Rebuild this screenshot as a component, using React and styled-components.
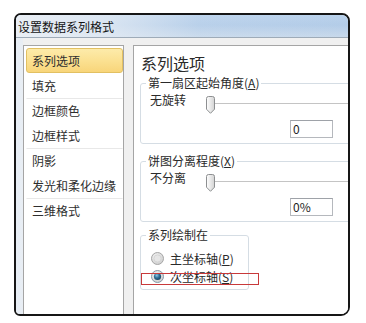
import React from 'react';
import styled, { createGlobalStyle } from 'styled-components';

const Global = createGlobalStyle`
  html, body { margin: 0; padding: 0; background: #ffffff; }
  body { font-family: "Noto Sans CJK SC", "Noto Sans", sans-serif; color: #2a2a2a; }
`;

const Page = styled.div`
  width: 366px;
  height: 323px;
  box-sizing: border-box;
  padding: 13px 0 0 14px;
  overflow: hidden;
`;

const Window = styled.div`
  width: 336px;
  height: 303px;
  box-sizing: border-box;
  border: 2px solid #161616;
  border-radius: 7px 8px 9px 6px;
  overflow: hidden;
  display: flex;
  flex-direction: column;
  background: #f0f0f0;
`;

const TitleBar = styled.div`
  height: 23px;
  flex: 0 0 23px;
  box-sizing: border-box;
  border-bottom: 1px solid #9eabb8;
  padding-left: 2px;
  display: flex;
  align-items: center;
  font-size: 12px;
  color: #141414;
  background:
    linear-gradient(to right, rgba(236,240,245,0.95) 0%, rgba(232,238,245,0.7) 28%, rgba(220,232,245,0.15) 55%, rgba(200,220,240,0) 100%),
    linear-gradient(to bottom, #bad2ec 0%, #b3cce8 45%, #c8d9eb 100%);
`;

const Client = styled.div`
  flex: 1;
  min-height: 0;
  display: flex;
  gap: 9px;
  padding: 7px 0 0 7px;
  overflow: hidden;
  background: linear-gradient(to right, #e6edf5 0, #e9eef4 7px, #f0f0f0 7px);
`;

const NavList = styled.div`
  flex: 0 0 101px;
  box-sizing: border-box;
  border: 1px solid #a5a5a5;
  border-bottom: none;
  background: #fff;
  padding: 2px 0 0 2px;
  display: flex;
  flex-direction: column;
`;

const NavItem = styled.div`
  height: 25px;
  box-sizing: border-box;
  display: flex;
  align-items: center;
  padding-left: 5px;
  font-size: 12px;
  color: #2e2e2e;
  white-space: nowrap;
  border: 1px solid ${p => (p.$selected ? '#e2c062' : 'transparent')};
  border-top-color: ${p => (p.$selected ? '#e2c062' : p.$sep ? '#e8e8e8' : 'transparent')};
  border-radius: ${p => (p.$selected ? '3px' : '0')};
  background: ${p => (p.$selected ? 'linear-gradient(to bottom, #fdebaa 0%, #fbe192 50%, #f8d57a 100%)' : 'transparent')};
`;

const Panel = styled.div`
  flex: 0 0 270px;
  box-sizing: border-box;
  border-left: 1px solid #a5a5a5;
  border-top: 1px solid #a5a5a5;
  background: #fff;
  padding: 0 0 0 6px;
  display: flex;
  flex-direction: column;
  align-items: flex-start;
`;

const Heading = styled.div`
  font-size: 16px;
  line-height: 20px;
  padding: 7px 0 0 1px;
  color: #2a2a2a;
`;

const Group = styled.fieldset`
  margin: ${p => p.$mt}px 0 0 0;
  padding: 0;
  border: 1px solid #d5dde4;
  border-radius: 3px;
  width: ${p => p.$w}px;
  min-width: 0;
  box-sizing: border-box;
`;

const Legend = styled.legend`
  margin-left: 5px;
  padding: 0 2px;
  font-size: 12px;
  line-height: 14px;
  color: #2a2a2a;
`;

const Key = styled.span`
  text-decoration: underline;
  text-underline-offset: 1px;
`;

const GroupBody = styled.div`
  padding: ${p => p.$pad};
  display: flex;
  flex-direction: column;
`;

const SliderRow = styled.div`
  display: flex;
  align-items: flex-start;
  padding-top: 3px;
`;

const SliderLabel = styled.div`
  width: 56px;
  font-size: 12px;
  line-height: 14px;
  color: #2a2a2a;
`;

const Thumb = styled.svg`
  margin-top: 3px;
  flex: 0 0 9px;
  display: block;
`;

const Track = styled.div`
  flex: 1;
  height: 1px;
  margin-top: 10px;
  background: #c4c4c4;
`;

const NumberBox = styled.div`
  margin: 6px 0 0 140px;
  width: 43px;
  height: 18px;
  box-sizing: border-box;
  border: 1px solid #b5b8bd;
  border-top-color: #9ea2a8;
  padding-left: 2px;
  font-size: 12px;
  line-height: 16px;
  color: #1e1e1e;
  background: #fff;
`;

const RadioRow = styled.div`
  position: relative;
  height: 16px;
  margin-top: ${p => p.$mt}px;
  display: flex;
  align-items: center;
  gap: 6px;
  font-size: 12px;
  color: #2a2a2a;
`;

const Highlight = styled.div`
  position: absolute;
  left: -10px;
  top: 5px;
  width: 118px;
  height: 12px;
  box-sizing: border-box;
  border: 1px solid #c8393a;
  pointer-events: none;
`;

function SliderThumb() {
  return (
    <Thumb width="9" height="18" viewBox="0 0 9 18">
      <defs>
        <linearGradient id="thumbGrad" x1="0" x2="1" y1="0" y2="0">
          <stop offset="0" stopColor="#ffffff" />
          <stop offset="1" stopColor="#d3d3d3" />
        </linearGradient>
      </defs>
      <path
        d="M0.5 2.5 Q0.5 0.5 2.5 0.5 H6.5 Q8.5 0.5 8.5 2.5 V13.2 L4.5 17.3 L0.5 13.2 Z"
        fill="url(#thumbGrad)"
        stroke="#8d8f91"
        strokeWidth="1"
      />
    </Thumb>
  );
}

function Radio({ checked }) {
  return (
    <svg width="13" height="13" viewBox="0 0 13 13" style={{ display: 'block', flex: '0 0 13px' }}>
      <defs>
        <radialGradient id="radioOuter" cx="0.4" cy="0.35" r="0.75">
          <stop offset="0" stopColor="#f8f8f8" />
          <stop offset="1" stopColor="#c9c9c9" />
        </radialGradient>
        <radialGradient id="radioDot" cx="0.4" cy="0.35" r="0.7">
          <stop offset="0" stopColor="#8fc6e4" />
          <stop offset="0.5" stopColor="#2f6f97" />
          <stop offset="1" stopColor="#173f5c" />
        </radialGradient>
      </defs>
      <circle cx="6.5" cy="6.5" r="6" fill="url(#radioOuter)" stroke={checked ? '#8698a6' : '#a6a6a6'} />
      {checked ? (
        <circle cx="6.5" cy="6.5" r="3.6" fill="url(#radioDot)" />
      ) : (
        <circle cx="6.5" cy="6.5" r="3.6" fill="#e6e6e6" stroke="#d0d0d0" strokeWidth="0.8" />
      )}
    </svg>
  );
}

const navItems = [
  { label: '系列选项', selected: true },
  { label: '填充' },
  { label: '边框颜色', sep: true },
  { label: '边框样式' },
  { label: '阴影', sep: true },
  { label: '发光和柔化边缘' },
  { label: '三维格式', sep: true },
];

function SliderGroup({ mt, title, keyChar, label, value }) {
  return (
    <Group $mt={mt} $w={260}>
      <Legend>
        {title}(<Key>{keyChar}</Key>)
      </Legend>
      <GroupBody $pad="0 0 5px 9px">
        <SliderRow>
          <SliderLabel>{label}</SliderLabel>
          <SliderThumb />
          <Track />
        </SliderRow>
        <NumberBox>{value}</NumberBox>
      </GroupBody>
    </Group>
  );
}

export default function App() {
  return (
    <>
      <Global />
      <Page>
        <Window>
          <TitleBar>设置数据系列格式</TitleBar>
          <Client>
            <NavList>
              {navItems.map(it => (
                <NavItem key={it.label} $selected={it.selected} $sep={it.sep}>
                  {it.label}
                </NavItem>
              ))}
            </NavList>
            <Panel>
              <Heading>系列选项</Heading>
              <SliderGroup mt={3} title="第一扇区起始角度" keyChar="A" label="无旋转" value="0" />
              <SliderGroup mt={10} title="饼图分离程度" keyChar="X" label="不分离" value="0%" />
              <Group $mt={6} $w={109}>
                <Legend>系列绘制在</Legend>
                <GroupBody $pad="8px 0 5px 10px">
                  <RadioRow $mt={0}>
                    <Radio />
                    <span>主坐标轴(<Key>P</Key>)</span>
                  </RadioRow>
                  <RadioRow $mt={2}>
                    <Radio checked />
                    <span>次坐标轴(<Key>S</Key>)</span>
                    <Highlight />
                  </RadioRow>
                </GroupBody>
              </Group>
            </Panel>
          </Client>
        </Window>
      </Page>
    </>
  );
}
